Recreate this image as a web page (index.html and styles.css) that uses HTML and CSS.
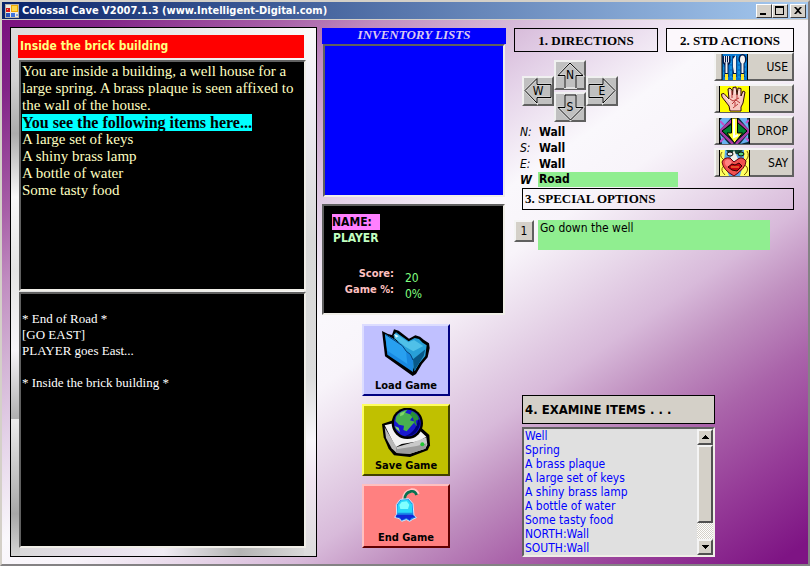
FILE: index.html
```html
<!DOCTYPE html>
<html lang="en">
<head>
<meta charset="utf-8">
<title>Colossal Cave</title>
<link rel="stylesheet" href="styles.css">
</head>
<body>
<div class="window">
  <header class="titlebar">
    <svg class="app-icon" viewBox="0 0 14 14" aria-hidden="true">
      <rect x="0.5" y="0.5" width="13" height="13" fill="#ece9e0" stroke="#b8b4a8"/>
      <rect x="1" y="4" width="4" height="4" fill="#d81818"/><rect x="2" y="5" width="1" height="1" fill="#ff9a80"/>
      <rect x="6" y="1" width="7" height="7" fill="#f0a800"/><rect x="7" y="2" width="5" height="5" fill="#ffd84a"/>
      <rect x="1" y="9" width="4" height="4" fill="#2850b8"/><rect x="6" y="9" width="4" height="4" fill="#3f74dc"/><rect x="11" y="10" width="2" height="2" fill="#88a8e8"/>
    </svg>
    <h1 class="title">Colossal Cave V2007.1.3 (www.Intelligent-Digital.com)</h1>
    <button class="win-btn" aria-label="Minimize"><svg viewBox="0 0 10 9"><path d="M1 7h6v2H1z"/></svg></button>
    <button class="win-btn" aria-label="Maximize"><svg viewBox="0 0 10 9"><path fill-rule="evenodd" d="M0 0h9v9H0zM1 2v6h7V2z"/></svg></button>
    <button class="win-btn close" aria-label="Close"><svg viewBox="0 0 10 9"><path d="M1 1h2l2 2 2-2h2L6 4.500l3 3.500H7L5 6 3 8H1l3-3.500z"/></svg></button>
  </header>

  <main class="content">
    <section class="story">
      <h2 class="room">Inside the brick building</h2>
      <div class="description sunken">
        <p class="intro">You are inside a building, a well house for a large spring. A brass plaque is seen affixed to the wall of the house.</p>
        <p class="seen"><mark>You see the following items here...</mark></p>
        <p>A large set of keys</p>
        <p>A shiny brass lamp</p>
        <p>A bottle of water</p>
        <p>Some tasty food</p>
      </div>
      <textarea class="log sunken" readonly aria-label="Game log">

* End of Road *
[GO EAST]
PLAYER goes East...

* Inside the brick building *</textarea>
    </section>

    <section class="status">
      <h2 class="inventory-title">INVENTORY LISTS</h2>
      <div class="inventory sunken"></div>
      <div class="player sunken">
        <span class="name-label">NAME:</span>
        <span class="player-name">PLAYER</span>
        <dl class="scores">
          <dt>Score:</dt><dd>20</dd>
          <dt>Game %:</dt><dd>0%</dd>
        </dl>
      </div>
      <div class="game-buttons">
        <button class="game-btn load">
          <svg viewBox="93 42 150 147" aria-hidden="true">
            <path d="M96 51L114 60L126 63L132 46L146 50L177 74L196 64L210 68L222 78L237 88L239 102L233 130L216 150L198 180L188 186L105 127Z" fill="#000"/>
            <path d="M130 65L138 55L176 82L194 72L207 75L218 86L230 94L226 126L208 148L194 172L170 114Z" fill="#28a0d8"/>
            <path d="M139 60L175 85L192 78L220 96L190 112L166 98L132 72Z" fill="#50c0e8"/>
            <path d="M132 59l14 7-8 5z" fill="#d8f8ff"/>
            <path d="M105 60L132 76L156 94L168 111L180 120L189 136L189 174L112 122Z" fill="#1888e0"/>
            <path d="M105 60L132 76L156 94L168 111L172 150L112 110Z" fill="#28a0f0"/>
            <path d="M106 61L157 95L169 112L181 121L189 138" fill="none" stroke="#064078" stroke-width="3"/>
            <path d="M189 136L192 172L221 126L226 106Z" fill="#085888"/>
          </svg>
          <span>Load Game</span>
        </button>
        <button class="game-btn save">
          <svg viewBox="93 24 150 147" aria-hidden="true">
            <path d="M96 72L125 62L210 80L238 105L240 136L233 151L180 171L132 166L116 146L101 112Z" fill="#000"/>
            <path d="M104 76L130 70L205 88L229 110L206 124L155 132L137 142Z" fill="#f2f2f2"/>
            <path d="M104 82L140 142L140 159L125 145L108 114Z" fill="#b8b8b8"/>
            <path d="M140 141L190 127L229 112L232 134L226 146L180 161L140 159Z" fill="#c9c9c9"/>
            <path d="M140 148L200 138L230 130L226 146L180 161L140 159Z" fill="#9c9c9c"/>
            <circle cx="217" cy="133" r="6" fill="#20c830"/>
            <circle cx="172" cy="70" r="47" fill="#000"/>
            <circle cx="172" cy="69" r="40" fill="#1818d0"/>
            <path d="M205 50A40 40 0 0 1 166 108Q202 94 205 50Z" fill="#000078"/>
            <path d="M139 49Q152 31 172 29L166 38L180 43L188 50L180 61L195 65L184 77L170 94L160 90L162 77L147 74L136 63Z" fill="#48b050"/>
            <path d="M186 34Q204 42 207 58L197 62L201 79L194 72L189 54L180 44Z" fill="#289038"/>
            <path d="M134 78l12 5 4 14q-12-8-16-19zM151 39l15-5-6 11-10 4z" fill="#80d868"/>
          </svg>
          <span>Save Game</span>
        </button>
        <button class="game-btn end">
          <svg viewBox="93 262 150 108" aria-hidden="true">
            <path d="M162 296Q162 274 184 269Q198 268 203 281" fill="none" stroke="#ffc8c8" stroke-width="12"/>
            <path d="M164 298Q163 277 183 272Q196 270 200 283" fill="none" stroke="#087050" stroke-width="8"/>
            <path d="M151 296L176 294L189 309L192 344L199 351L188 356L179 362L169 357L155 362L148 354L134 350L140 341L139 312Z" fill="#1888e8" stroke="#d0e8ff" stroke-width="3"/>
            <path d="M153 299L174 297L186 311L187 336L142 336L143 312Z" fill="#28d8f8"/>
            <path d="M155 304L170 302L178 312L174 325L151 325L148 313Z" fill="#80ffff"/>
            <path d="M140 342L188 342L196 350L185 351L179 359L169 352L155 359L150 351L137 350Z" fill="#1028d8"/>
          </svg>
          <span>End Game</span>
        </button>
      </div>
    </section>

    <section class="controls">
      <div class="top">
        <div class="directions">
          <h2 class="heading">1. DIRECTIONS</h2>
          <div class="compass">
            <button class="dir north"><svg viewBox="0 0 32 30" aria-hidden="true"><path d="M16 3L4 15.500H11V28H22V15.500H29Z" class="face"/><path d="M4 15.500L16 3L29 15.500H22V28M4 15.500H11V28" class="edge"/></svg><span>N</span></button>
            <button class="dir west"><svg viewBox="0 0 32 30" aria-hidden="true"><path d="M3 14.500L15 2.500V8.500H29V21.500H15V27Z" class="face"/><path d="M15 27L3 14.500L15 2.500V8.500H29V21.500H15V27" class="edge"/></svg><span>W</span></button>
            <button class="dir east"><svg viewBox="0 0 32 30" aria-hidden="true"><path d="M3 8.500H17V2.500L29 14.500L17 27V21.500H3Z" class="face"/><path d="M3 21.500V8.500H17V2.500L29 14.500L17 27V21.500H3" class="edge"/></svg><span>E</span></button>
            <button class="dir south"><svg viewBox="0 0 32 30" aria-hidden="true"><path d="M11 3H22V15.500H29L16.500 28L4 15.500H11Z" class="face"/><path d="M11 15.500V3H22V15.500H29L16.500 28L4 15.500Z" class="edge"/></svg><span>S</span></button>
          </div>
          <dl class="exits">
            <dt>N:</dt><dd>Wall</dd>
            <dt>S:</dt><dd>Wall</dd>
            <dt>E:</dt><dd>Wall</dd>
            <dt class="open">W</dt><dd class="open">Road</dd>
          </dl>
        </div>
        <div class="actions">
          <h2 class="heading actions-heading">2. STD ACTIONS</h2>
          <button class="action">
            <svg viewBox="0 0 31 26" aria-hidden="true"><rect x="3" width="26" height="26" fill="#0878d0"/><path d="M3 0v26M28.500 0v26" stroke="#000"/>
              <path d="M5 3v20M12 2v22M20 2v22M26 4v20" stroke="#20a8f0" stroke-dasharray="3 2"/>
              <g stroke="#001848" stroke-width="4" fill="none"><path d="M5.500 2v6l2 3 2-3V2M7.500 10v13M15.500 2v21M23.500 8v15"/><ellipse cx="23.500" cy="5" rx="2" ry="3"/></g>
              <path d="M5.500 2v6l2 2 2-2V2M7.500 2v14" fill="none" stroke="#e8e8f0"/><path d="M7.500 10v9" stroke="#f0f0f0" stroke-width="2"/>
              <path d="M14 13V5l3-4v18h-2z" fill="#f0f0f0"/><ellipse cx="23.500" cy="5.500" rx="2.500" ry="4" fill="#f4f4f4"/><path d="M23.500 9v10" stroke="#f0f0f0" stroke-width="2"/>
              <path d="M6 20h3v6H6zM14 20h3v6h-3zM22 20h3v6h-3z" fill="#ffe828"/></svg>
            <span>USE</span></button>
          <button class="action">
            <svg viewBox="0 0 31 26" aria-hidden="true"><rect width="31" height="26" fill="#ffff00"/><path d="M0.500 0v26M30.500 0v26" stroke="#000"/>
              <path d="M11 25L10 20L3 11L2.500 8L5 7.500L10 13L9 3L11 2L13 4L13.500 9L14 1.500L17 1L18 9L19 2L22 2.500L22 10L24 5L26 6L24 17L22 21L22 25Z" fill="#f8c8c0" stroke="#300808"/>
              <path d="M11 13l3 2 6-3M13 18l4-4 4 3M14 22l5-4M13 5v7M18 8v5M16 16v4" fill="none" stroke="#b83838"/><path d="M11 5v4M16 3v5M20 5v4M7 11l4 5" stroke="#fff0e8"/></svg>
            <span>PICK</span></button>
          <button class="action">
            <svg viewBox="0 0 31 26" aria-hidden="true"><rect width="31" height="26" fill="#082838"/>
              <path d="M3 0h9L1 12V2zM20 0h8l2 12zM1 16l9 10H3zM29 16v8l-8 2z" fill="#68b0f0"/>
              <path d="M15.500 0L1 13l13 13M15.500 0L30 13L17 26" fill="none" stroke="#a838a0" stroke-width="2.500"/>
              <path d="M15.500 4L3 13l10 9V4zM18 4l10 9-10 9z" fill="#008030" stroke="#000"/>
              <path d="M1 3l4 4M27 5l3-3M1 24l4-4M27 20l3 3" stroke="#c050c8" stroke-width="2"/>
              <path d="M12.500 0h6v15h5L15.500 25L8 15h4.500z" fill="#ffff38" stroke="#000"/><path d="M15 1v18l4-2" fill="none" stroke="#fff" stroke-width="2"/><path d="M0.500 0v26M30.500 0v26" stroke="#000"/></svg>
            <span>DROP</span></button>
          <button class="action">
            <svg viewBox="0 0 31 26" aria-hidden="true"><rect width="31" height="26" fill="#ffff60"/><path d="M6 0h19v11l-4 15H10L5 13z" fill="#58a8e8"/>
              <path d="M3 2q-3 4 1 7t0 8q-3 3 2 8M28 1q3 5-1 9t1 7q2 4-3 8" fill="none" stroke="#806000"/><path d="M7 0h17l-4 4H10z" fill="#104838"/>
              <path d="M15 0l4 9-4 3-4-3z" fill="#f0f0e8"/><ellipse cx="11" cy="4" rx="3" ry="2" fill="#e8e8e8" stroke="#000"/><ellipse cx="22" cy="4" rx="3" ry="2" fill="#58d080" stroke="#000"/>
              <path d="M15 12L11 8Q5 7 3 12Q4 20 15 26Q27 18 27 11Q23 6 19 9Z" fill="#f05050" stroke="#600010"/><path d="M6 11q3-4 7 1l-3 5q-5-1-4-6z" fill="#ff8080"/>
              <path d="M9 17l4-3 3 1 4-2 3 3-5 5-5-1z" fill="#c80010" stroke="#300000"/><path d="M12 17h8" stroke="#ffa040"/><path d="M0.500 0v26M30.500 0v26" stroke="#000"/></svg>
            <span>SAY</span></button>
        </div>
      </div>

      <h2 class="heading special-heading">3. SPECIAL OPTIONS</h2>
      <div class="option">
        <button class="option-btn" id="opt1">1</button>
        <label class="option-text" for="opt1">Go down the well</label>
      </div>

      <div class="examine">
        <h2 class="examine-heading"><label for="items">4. EXAMINE ITEMS . . .</label></h2>
        <div class="listbox sunken">
          <select class="items" id="items" size="9">
            <option>Well</option>
            <option>Spring</option>
            <option>A brass plaque</option>
            <option>A large set of keys</option>
            <option>A shiny brass lamp</option>
            <option>A bottle of water</option>
            <option>Some tasty food</option>
            <option>NORTH:Wall</option>
            <option>SOUTH:Wall</option>
          </select>
          <div class="scrollbar">
            <button class="scroll-btn" aria-label="Scroll up"><svg viewBox="0 0 7 4"><path d="M3 0h1v1h1v1h1v1h1v1H0V3h1V2h1V1h1z"/></svg></button>
            <div class="thumb"></div>
            <div class="track"></div>
            <button class="scroll-btn" aria-label="Scroll down"><svg viewBox="0 0 7 4"><path d="M0 0h7v1H6v1H5v1H4v1H3V3H2V2H1V1H0z"/></svg></button>
          </div>
        </div>
      </div>
    </section>
  </main>
</div>
</body>
</html>
```
FILE: styles.css
```css
* { box-sizing: border-box; }

:root {
  --ui: "DejaVu Sans Condensed", "DejaVu Sans", sans-serif;
  --serif: "Liberation Serif", serif;
  --face: #d4d0c8;
}

body, h1, h2, p, dl, dd { margin: 0; }

body { font: 12px/16px var(--ui); color: #000; }

h1, h2 { font-size: inherit; }

button { font: inherit; color: #000; padding: 0; margin: 0; }

.window {
  display: flex;
  flex-direction: column;
  min-height: 100vh;
  border: 2px solid;
  border-color: #d4d0c8 #848284 #848284 #d4d0c8;
  background: linear-gradient(to bottom right,
    #780a7c 0%, #822488 8%, #a860a8 19%, #c08cc0 25%, #d2b2d4 32%,
    #e4d2e8 39%, #faf8fc 48%, #f8f4fa 54%, #e8d8ea 61%, #d8bada 68%,
    #c090c0 74%, #aa64aa 81%, #963c98 89%, #7e1484 98%);
}

.titlebar {
  display: flex;
  align-items: center;
  height: 18px;
  padding: 0 2px 0 3px;
  background: linear-gradient(to right, #0a246a, #a6caf0);
  border-bottom: 1px solid var(--face);
}

.app-icon { width: 14px; height: 14px; }

.title { flex: 1; margin-left: 3px; color: #fff; font-size: 11px; white-space: nowrap; }

.win-btn {
  display: grid;
  place-items: center;
  width: 16px;
  height: 14px;
  background: var(--face);
  border: 1px solid;
  border-color: #fff #404040 #404040 #fff;
}
.win-btn.close { margin-left: 2px; }
.win-btn svg { width: 10px; height: 9px; }

.content {
  flex: 1;
  display: grid;
  grid-template-columns: 307fr 184fr 283fr;
  column-gap: 5px;
  padding: 7px 14px 7px 8px;
}

.sunken { border: 2px solid; border-color: #606060 #f0eee8 #f0eee8 #606060; }

.story {
  display: flex;
  flex-direction: column;
  padding: 7px 10px 8px 7px;
  border: 1px solid #000;
  background:
    linear-gradient(#dcdcdc 0%, #d0d0d0 10%, #acacac 20%, #f8f8f8 32%, #e4e4e4 46%, #f6f4f8 61%,
      #b0b0b0 74%, #ececec 74%, #a8a8a8 92%, #d4d4d4 100%) left / 9px 100% no-repeat,
    linear-gradient(#fafafa 0%, #f0ecf4 14%, #d8d8d8 40%, #dcdcdc 66%, #f8f6fa 78%, #f0e4f0 86%, #dcdcdc 100%) right / 12px 100% no-repeat,
    linear-gradient(to right, #d8d8d8, #e8e0ec 30%, #f0ecf4 50%, #b4b4b4 75%, #e0e0e0) bottom / 100% 10px no-repeat,
    linear-gradient(to right, #dcdcdc, #e8e8e8 50%, #fafafa);
}

.room {
  height: 23px;
  margin-right: 2px;
  padding-left: 2px;
  background: #f00;
  color: #ffff80;
  font-size: 12px;
  line-height: 23px;
}

.description, .log { background: #000; margin-left: 1px; padding: 1px; }

.description {
  flex: 231 1 0;
  margin-top: 2px;
  color: #ffffc0;
  font: 15px/17px var(--serif);
}
.description mark { display: block; width: fit-content; background: #0ff; color: #000; font-weight: bold; font-size: 16px; }

.log {
  flex: 256 1 0;
  margin-top: 1px;
  resize: none;
  overflow: hidden;
  outline: 0;
  border-radius: 0;
  color: #fff;
  font: 13px/16px var(--serif);
}

.status { display: flex; flex-direction: column; padding-top: 1px; }

.inventory-title {
  height: 16px;
  background: #00f;
  color: #dcc8f0;
  font: italic bold 13px/14px var(--serif);
  text-align: center;
}

.inventory { height: 153px; background: #00f; margin: 0 1px; }

.player {
  display: flex;
  flex-direction: column;
  align-items: flex-start;
  height: 111px;
  margin: 7px 1px 0 0;
  padding: 8px;
  background: #000;
  font-weight: bold;
}
.name-label { width: 48px; background: #ff80ff; }
.player-name { padding-left: 1px; color: #c0ffc0; }
.scores {
  display: grid;
  grid-template-columns: 62px 1fr;
  column-gap: 11px;
  margin-top: 20px;
  font-size: 11px;
}
.scores dt { color: #ffc0c0; text-align: right; }
.scores dd { color: #80ff80; font-weight: normal; font-size: 12px; padding-top: 4px; margin-bottom: -4px; }

.game-buttons {
  display: flex;
  flex-direction: column;
  align-items: center;
  gap: 8px;
  margin: 9px 16px 0 0;
}
.game-btn {
  display: flex;
  flex-direction: column;
  align-items: center;
  justify-content: space-between;
  width: 88px;
  height: 72px;
  padding: 2px 0 1px;
  border: 2px solid;
  font-weight: bold;
  font-size: 11px;
  line-height: 14px;
}
.game-btn svg { width: 50px; height: 49px; }
.load { background: #c0c0ff; border-color: #dcdcff #000080 #000080 #dcdcff; }
.save { background: #c0c000; border-color: #ffff60 #404000 #404000 #ffff60; }
.end { height: 64px; background: #ff8080; border-color: #ffc0c0 #600000 #600000 #ffc0c0; }
.end svg { height: 36px; }

.controls { display: flex; flex-direction: column; padding: 1px 0 0 3px; }

.top { display: grid; grid-template-columns: 144fr 128fr; column-gap: 8px; }

.heading {
  height: 24px;
  border: 1px solid #000;
  font: bold 13px/24px var(--serif);
  text-align: center;
  white-space: nowrap;
}

.compass {
  display: grid;
  grid-template-columns: 32px 32px 32px;
  grid-template-rows: 16px 16px 16px 14px;
  margin: 8px 0 0 8px;
}
.dir {
  display: grid;
  place-items: center;
  height: 30px;
  background: #c0c0c0;
  border: 2px solid;
  border-color: #f0f0f0 #606060 #606060 #f0f0f0;
  font-size: 12px;
}
.dir svg { grid-area: 1 / 1; width: 32px; height: 30px; margin: -2px; }
.dir span { grid-area: 1 / 1; }
.face { fill: #c0c0c0; stroke: #e0e0e0; stroke-width: 2; }
.edge { fill: none; stroke: #000; }
.north { grid-area: 1 / 2 / 3 / 3; }
.west { grid-area: 2 / 1 / 4 / 2; }
.east { grid-area: 2 / 3 / 4 / 4; }
.south { grid-area: 3 / 2 / 5 / 3; }

.exits {
  display: grid;
  grid-template-columns: 18px 140px;
  margin: 2px -20px 0 6px;
  font-weight: bold;
}
.exits dt { font-style: italic; font-weight: normal; }
.exits dt.open { font-weight: bold; }
.exits dd { height: 16px; padding-left: 1px; }
.exits dd.open { height: 15px; background: #90ee90; line-height: 15px; }

.actions { display: flex; flex-direction: column; align-items: flex-end; gap: 3px; }
.actions-heading { align-self: stretch; margin-bottom: -3px; background: #fcf8fc; }
.action {
  display: flex;
  align-items: center;
  justify-content: space-between;
  width: 80px;
  height: 29px;
  padding: 0 4px 0 3px;
  background: var(--face);
  border: 2px solid;
  border-color: #f4f4f4 #606060 #606060 #f4f4f4;
  font-size: 12px;
}
.action svg { width: 31px; height: 26px; }

.special-heading {
  height: 22px;
  margin-left: 8px;
  padding-left: 2px;
  line-height: 20px;
  text-align: left;
}

.option { display: flex; align-items: flex-start; gap: 4px; margin: 10px 24px 0 0; }
.option-btn {
  width: 20px;
  height: 22px;
  background: var(--face);
  border: 2px solid;
  border-color: #f4f4f4 #606060 #606060 #f4f4f4;
}
.option-text { flex: 1; height: 30px; padding-left: 2px; background: #90ee90; }

.examine { width: 69%; margin: auto 0 0 8px; min-width: 193px; }
.examine-heading {
  height: 29px;
  padding-left: 2px;
  border: 1px solid #000;
  background: var(--face);
  font-size: 13px;
  line-height: 27px;
}
.listbox { display: flex; height: 130px; margin-top: 3px; background: #e0e0e0; }
.items {
  flex: 1;
  min-width: 0;
  height: 126px;
  padding: 0;
  border: 0;
  border-radius: 0;
  outline: 0;
  overflow: hidden;
  background: #e0e0e0;
  color: #00f;
  font: 12px/14px var(--ui);
}
.items option { display: block; height: 14px; min-height: 14px; padding: 0 1px; line-height: 14px; }

.scrollbar { display: flex; flex-direction: column; width: 16px; }
.scroll-btn, .thumb {
  background: var(--face);
  border: 2px solid;
  border-color: #f4f4f4 #505050 #505050 #f4f4f4;
}
.scroll-btn { display: grid; place-items: center; height: 16px; }
.scroll-btn svg { width: 7px; height: 4px; }
.thumb { flex: 77; }
.track { flex: 17; background: repeating-conic-gradient(#fff 0 25%, #d4d0c8 0 50%) 0 0 / 2px 2px; }
```
